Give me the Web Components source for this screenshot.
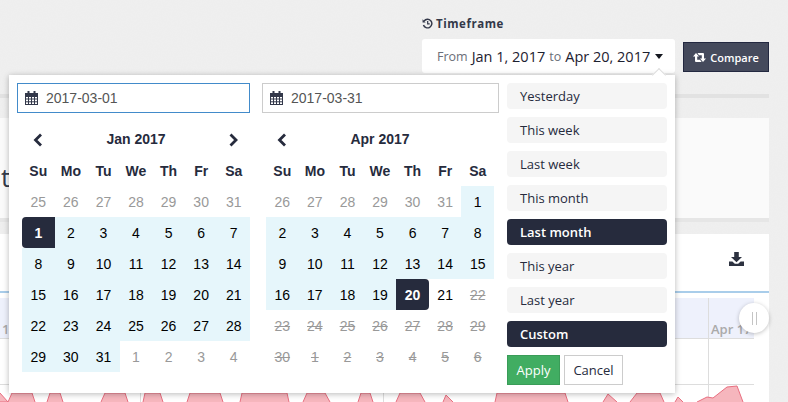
<!DOCTYPE html>
<html>
<head>
<meta charset="utf-8">
<title>Timeframe</title>
<style>
  html, body { margin: 0; height: 100%; overflow: hidden; background: #eeeeee; }
  html {
    background-image: url("data:image/svg+xml,%3Csvg xmlns='http://www.w3.org/2000/svg' width='200' height='200'%3E%3Cfilter id='n'%3E%3CfeTurbulence type='fractalNoise' baseFrequency='.8' numOctaves='2' stitchTiles='stitch'/%3E%3CfeColorMatrix values='0 0 0 0 1 0 0 0 0 1 0 0 0 0 1 .6 0 0 0 -.2'/%3E%3C/filter%3E%3Crect width='200' height='200' filter='url(%23n)' opacity='.25'/%3E%3C/svg%3E");
  }
  body { background: none; font-family: "Open Sans", sans-serif; color: #262b3d; }
</style>
</head>
<body>
<report-page>
  <date-trigger slot="toolbar"></date-trigger>
  <compare-button slot="toolbar">Compare</compare-button>
  <date-popup slot="overlay"></date-popup>
</report-page>

<script>
class ReportPage extends HTMLElement {
    connectedCallback() {
        this.attachShadow({ mode: 'open' });
        this.shadowRoot.innerHTML = `
            <style>
                :host {
                    display: block;
                    position: relative;
                    width: 769px;
                    height: 402px;
                    overflow: visible;
                }
                .toolbar {
                    display: flex;
                    justify-content: flex-end;
                    align-items: flex-end;
                    gap: 8px;
                    height: 73px;
                    box-sizing: border-box;
                }
                .rule {
                    height: 4px;
                    margin-top: 21px;
                    background: #e2e2e2;
                }
                .summary {
                    height: 100px;
                    margin-top: 20px;
                    background: #fafafa;
                    border-bottom: 4px solid #e6e6e6;
                    padding-left: 1px;
                    font-size: 26px;
                    line-height: 118px;
                    color: #333b4a;
                    box-sizing: content-box;
                    overflow: hidden;
                }
                chart-panel { margin-top: 12px; }
            </style>
            <div class="toolbar"><slot name="toolbar"></slot></div>
            <div class="rule"></div>
            <div class="summary">t</div>
            <chart-panel></chart-panel>
            <slot name="overlay"></slot>
        `;
    }
}

class DateTrigger extends HTMLElement {
    connectedCallback() {
        this.attachShadow({ mode: 'open' });
        this.shadowRoot.innerHTML = `
            <style>
                :host { display: block; width: 253px; margin-right: 0; }
                .label {
                    display: flex;
                    align-items: center;
                    gap: 3px;
                    height: 16px;
                    margin-bottom: 8px;
                    font: 700 11.5px "Open Sans", sans-serif;
                    letter-spacing: .55px;
                    color: #333849;
                }
                .box {
                    display: flex;
                    align-items: center;
                    height: 34px;
                    padding-left: 15px;
                    background: #fff;
                    border-radius: 3px;
                    font: 14.5px "Open Sans", sans-serif;
                    color: #1d2130;
                    white-space: nowrap;
                }
                small { font-size: 12.5px; color: #6a6e78; }
                .from { margin-right: 4px; }
                .to { margin: 0 4px; }
                .caret {
                    width: 0; height: 0;
                    margin-left: 5px;
                    border: 4.5px solid transparent;
                    border-top: 5px solid #14171f;
                    border-bottom: 0;
                }
            </style>
            <div class="label">
                <svg width="11" height="11" viewBox="0 0 12 12" fill="none" stroke="#333849" stroke-width="1.6">
                    <path d="M2.3 3.2A4.7 4.7 0 1 1 1.6 7.6"/>
                    <path d="M.6 1.4v3.4H4z" fill="#333849" stroke="none"/>
                    <path d="M6.2 3.4v3h2.2" stroke-width="1.3"/>
                </svg>
                Timeframe
            </div>
            <div class="box">
                <small class="from">From</small>Jan 1, 2017<small class="to">to</small>Apr 20, 2017<span class="caret"></span>
            </div>
        `;
    }
}

class CompareButton extends HTMLElement {
    connectedCallback() {
        this.attachShadow({ mode: 'open' });
        this.shadowRoot.innerHTML = `
            <style>
                :host {
                    display: flex;
                    align-items: center;
                    justify-content: center;
                    gap: 4px;
                    width: 86px;
                    height: 30px;
                    margin-bottom: 1px;
                    box-sizing: border-box;
                    background: #454a5c;
                    border: 1px solid #232840;
                    color: #fff;
                    font: 600 11px "Open Sans", sans-serif;
                }
            </style>
            <svg width="13" height="9" viewBox="0 0 13 9" fill="#fff">
                <path d="M0 3.4 3 0l3 3.4H4.2v3.4H7L8.6 9H3a1 1 0 0 1-1-1V3.4z"/>
                <path d="M13 5.6 10 9 7 5.6h1.8V2.2H6L4.4 0H10a1 1 0 0 1 1 1v4.6z"/>
            </svg>
            <slot></slot>
        `;
    }
}

class ChartPanel extends HTMLElement {
    connectedCallback() {
        const areas = [
            '0,393 8,402 0,402',
            '8,402 12,393 32,393 35,402',
            '47,402 50,393 60,393 63,402',
            '101,402 105,393 125,393 128,402',
            '143,402 145,393 160,393 163,402',
            '187,402 190,393 220,393 223,402',
            '240,402 242,393 287,393 289,402',
            '303,402 307,393 325,393 330,402',
            '358,402 361,393 370,393 373,402',
            '396,402 400,393 420,393 425,402',
            '443,402 446,395 453,402',
            '495,402 497,393 565,393 568,402',
            '603,402 608,394 617,402',
            '630,402 637,393 660,393 664,402',
            '675,402 678,397 683,402',
            '697,402 707,397 713,398 727,387 737,386 743,402'
        ];
        this.attachShadow({ mode: 'open' });
        this.shadowRoot.innerHTML = `
            <style>
                :host {
                    display: block;
                    position: relative;
                    height: 168px;
                    background: #fff;
                }
                .head {
                    display: flex;
                    justify-content: flex-end;
                    align-items: center;
                    height: 57px;
                    padding: 0 25px 7px 0;
                    box-sizing: border-box;
                }
                .line { height: 2px; background: #a9cdea; }
                svg.plot { display: block; margin-top: 5px; }
                .handle {
                    position: absolute;
                    left: 739px;
                    top: 69px;
                    width: 30px;
                    height: 30px;
                    border-radius: 50%;
                    background: #fff;
                    box-shadow: 0 1px 4px rgba(0,0,0,.25);
                    display: flex;
                    justify-content: center;
                    align-items: center;
                    gap: 3px;
                }
                .handle i { width: 1px; height: 13px; background: #c4c4c4; }
            </style>
            <div class="head">
                <svg width="15" height="14" viewBox="0 0 15 14" fill="#2d3240">
                    <path d="M5.2 0h4.6v5H13L7.5 10.2 2 5h3.2z"/>
                    <path d="M0 9.6h3.4l2.4 2.2h3.4l2.4-2.2H15V14H0z"/>
                </svg>
            </div>
            <div class="line"></div>
            <svg class="plot" width="769" height="104" viewBox="0 298 769 104">
                <rect x="0" y="298" width="754" height="40" fill="#eef1fc"/>
                <path d="M0 338.5H754M0 384.5H754" stroke="#dddddd"/>
                <path d="M140.5 384V402M383.5 384V402M545.5 384V402M708.5 298V402" stroke="#dddddd"/>
                <text x="2" y="333.5" font-family="Open Sans" font-size="13" font-weight="600" fill="#aaaaaa">1</text>
                <text x="711" y="333.5" font-family="Open Sans" font-size="13" font-weight="600" fill="#aaaaaa">Apr 17</text>
                ${areas.map(p => `<polyline points="${p}" fill="#f6b6bd" stroke="#e86f80" stroke-width="1"/>`).join('')}
            </svg>
            <div class="handle"><i></i><i></i></div>
        `;
    }
}

class DateField extends HTMLElement {
    connectedCallback() {
        const focused = this.hasAttribute('focused');
        this.attachShadow({ mode: 'open' });
        this.shadowRoot.innerHTML = `
            <style>
                :host {
                    display: flex;
                    align-items: center;
                    gap: 8px;
                    height: 30px;
                    box-sizing: border-box;
                    padding-left: 7px;
                    background: #fff;
                    border: 1px solid ${focused ? '#428bca' : '#cccccc'};
                    font: 14px "Liberation Sans", Arial, sans-serif;
                    color: #555555;
                }
            </style>
            <svg width="13" height="14" viewBox="0 0 13 14" fill="none" stroke="#33384a" stroke-width="1">
                <rect x=".5" y="2.5" width="12" height="11"/>
                <path d="M.5 2.5h12v3H.5z" fill="#33384a"/>
                <path d="M3.5 5.5v8M6.5 5.5v8M9.5 5.5v8M.5 8h12M.5 10.8h12"/>
                <path d="M3.5 0v3.5M9.5 0v3.5" stroke-width="2"/>
            </svg>
            <slot></slot>
        `;
    }
}

// days: one token per cell, number + state letter
// o = other month, r = in range, s = range start, e = range end, x = disabled, n = plain
class DateCalendar extends HTMLElement {
    connectedCallback() {
        const title = this.getAttribute('title-text');
        const hasNext = this.hasAttribute('next');
        const days = this.getAttribute('days').trim().split(/\s+/);
        const heads = ['Su', 'Mo', 'Tu', 'We', 'Th', 'Fr', 'Sa'];
        this.attachShadow({ mode: 'open' });
        this.shadowRoot.innerHTML = `
            <style>
                :host {
                    display: grid;
                    grid-template-columns: repeat(7, 1fr);
                    grid-auto-rows: 31px;
                    font: 14px "Liberation Sans", Arial, sans-serif;
                    color: #000;
                    text-align: center;
                }
                div {
                    display: flex;
                    align-items: center;
                    justify-content: center;
                }
                .title { grid-column: span 5; font-weight: 700; color: #262b3d; padding-bottom: 2px; }
                .head { font-weight: 700; color: #262b3d; }
                .o { color: #999999; }
                .r { background: #e6f6fb; }
                .s, .e { background: #262b3d; color: #fff; font-weight: 700; }
                .s { border-radius: 4px 0 0 4px; }
                .e { border-radius: 0 4px 4px 0; }
                .x { color: #999999; text-decoration: line-through; }
            </style>
            <div>${DateCalendar.chevron('M8 1.5 2.5 7 8 12.5')}</div>
            <div class="title">${title}</div>
            <div>${hasNext ? DateCalendar.chevron('M2.5 1.5 8 7 2.5 12.5') : ''}</div>
            ${heads.map(h => `<div class="head">${h}</div>`).join('')}
            ${days.map(d => `<div class="${d.slice(-1)}">${d.slice(0, -1)}</div>`).join('')}
        `;
    }

    static chevron(d) {
        return `<svg width="11" height="14" viewBox="0 0 11 14" fill="none" stroke="#262b3d" stroke-width="2.8"><path d="${d}"/></svg>`;
    }
}

class RangeOption extends HTMLElement {
    connectedCallback() {
        this.attachShadow({ mode: 'open' });
        this.shadowRoot.innerHTML = `
            <style>
                :host {
                    display: flex;
                    align-items: center;
                    height: 26px;
                    padding-left: 13px;
                    border-radius: 4px;
                    background: #f5f5f5;
                    color: #262b3d;
                    font: 13px "Open Sans", sans-serif;
                }
                :host([active]) {
                    background: #262b3d;
                    color: #fff;
                    font-weight: 600;
                }
            </style>
            <slot></slot>
        `;
    }
}

class DatePopup extends HTMLElement {
    connectedCallback() {
        this.attachShadow({ mode: 'open' });
        this.shadowRoot.innerHTML = `
            <style>
                :host {
                    display: flex;
                    position: absolute;
                    left: 9px;
                    top: 75px;
                    width: 666px;
                    height: 318px;
                    box-sizing: border-box;
                    padding: 8px;
                    background: #fff;
                    box-shadow: 0 1px 6px rgba(0,0,0,.28);
                }
                :host::before {
                    content: "";
                    position: absolute;
                    left: 645px;
                    top: -5px;
                    width: 9px;
                    height: 9px;
                    background: #fff;
                    border-left: 1px solid #dddddd;
                    border-top: 1px solid #dddddd;
                    transform: rotate(45deg);
                }
                .col { width: 233px; margin-right: 12px; }
                .col + .col { width: 237px; margin-right: 8px; }
                date-calendar { margin: 11px 0 0 5px; }
                .col + .col date-calendar { margin: 11px 5px 0 4px; }
                .ranges { display: flex; flex-direction: column; gap: 8px; width: 160px; }
                .actions { display: flex; gap: 4px; }
                .btn {
                    display: flex;
                    align-items: center;
                    justify-content: center;
                    height: 30px;
                    box-sizing: border-box;
                    font: 13px "Open Sans", sans-serif;
                }
                .apply { width: 53px; background: #41ad62; border: 1px solid #3a9c58; color: #fff; }
                .cancel { width: 59px; background: #fff; border: 1px solid #cccccc; color: #262b3d; }
            </style>
            <div class="col">
                <date-field focused>2017-03-01</date-field>
                <date-calendar title-text="Jan 2017" next days="
                    25o 26o 27o 28o 29o 30o 31o
                    1s 2r 3r 4r 5r 6r 7r
                    8r 9r 10r 11r 12r 13r 14r
                    15r 16r 17r 18r 19r 20r 21r
                    22r 23r 24r 25r 26r 27r 28r
                    29r 30r 31r 1o 2o 3o 4o"></date-calendar>
            </div>
            <div class="col">
                <date-field>2017-03-31</date-field>
                <date-calendar title-text="Apr 2017" days="
                    26o 27o 28o 29o 30o 31o 1r
                    2r 3r 4r 5r 6r 7r 8r
                    9r 10r 11r 12r 13r 14r 15r
                    16r 17r 18r 19r 20e 21n 22x
                    23x 24x 25x 26x 27x 28x 29x
                    30x 1x 2x 3x 4x 5x 6x"></date-calendar>
            </div>
            <div class="ranges">
                <range-option>Yesterday</range-option>
                <range-option>This week</range-option>
                <range-option>Last week</range-option>
                <range-option>This month</range-option>
                <range-option active>Last month</range-option>
                <range-option>This year</range-option>
                <range-option>Last year</range-option>
                <range-option active>Custom</range-option>
                <div class="actions">
                    <div class="btn apply">Apply</div>
                    <div class="btn cancel">Cancel</div>
                </div>
            </div>
        `;
    }
}

customElements.define('report-page', ReportPage);
customElements.define('date-trigger', DateTrigger);
customElements.define('compare-button', CompareButton);
customElements.define('chart-panel', ChartPanel);
customElements.define('date-field', DateField);
customElements.define('date-calendar', DateCalendar);
customElements.define('range-option', RangeOption);
customElements.define('date-popup', DatePopup);
</script>
</body>
</html>
